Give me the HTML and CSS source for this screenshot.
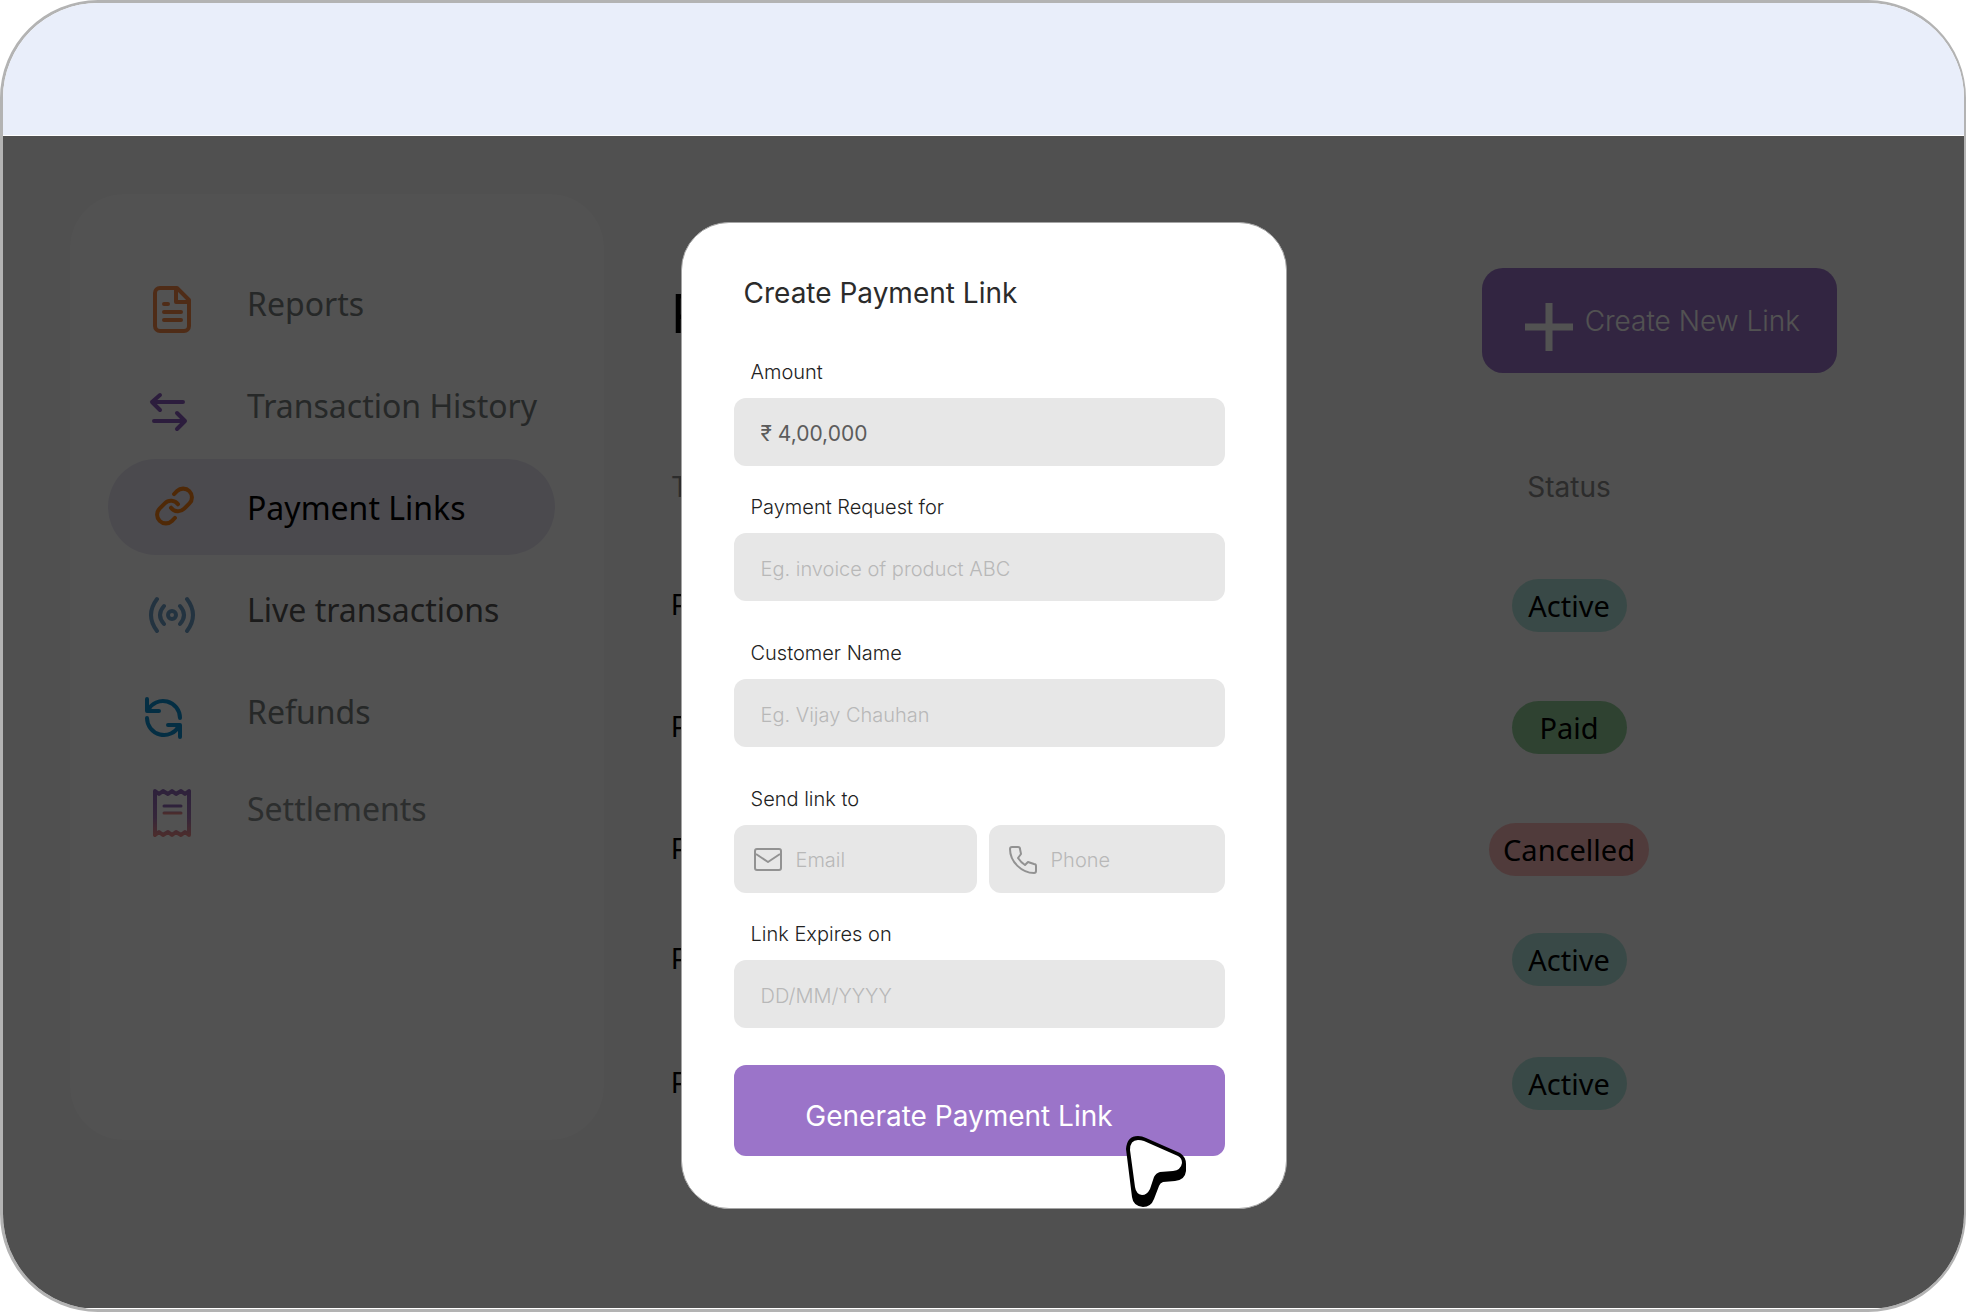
FILE: index.html
```html
<!DOCTYPE html>
<html lang="en">
<head>
    <meta charset="UTF-8">
    <meta name="viewport" content="width=device-width, initial-scale=1.0">
    <title>Payment Links</title>
    <link rel="stylesheet" href="styles.css">
</head>
<body>
    <div class="app">
        <header class="topbar"></header>
        <div class="workspace">
            <nav class="sidebar">
                <a href="#" class="nav-item">
                    <svg class="nav-icon" viewBox="0 0 56 64" stroke="#f5894a">
                        <path d="M33 17H16a5 5 0 0 0-5 5v33a5 5 0 0 0 5 5h24a5 5 0 0 0 5-5V29z"/>
                        <path d="M32 18v13h12M20 33h4M20 41h17M20 49h17"/>
                    </svg>
                    <span>Reports</span>
                </a>
                <a href="#" class="nav-item">
                    <svg class="nav-icon" viewBox="0 0 56 64" stroke="#8a5bbd">
                        <path d="M39 29H8M16 22l-8 7 8 8M10 48h31M33 40l8 8-8 8"/>
                    </svg>
                    <span>Transaction History</span>
                </a>
                <a href="#" class="nav-item active">
                    <svg class="nav-icon" viewBox="0 0 56 64" stroke="#f57f17">
                        <g transform="translate(9.5 10) scale(1.75)" stroke-width="2.3">
                            <path d="M10 13a5 5 0 0 0 7.54.54l3-3a5 5 0 0 0-7.07-7.07l-1.72 1.71"/>
                            <path d="M14 11a5 5 0 0 0-7.54-.54l-3 3a5 5 0 0 0 7.07 7.07l1.71-1.71"/>
                        </g>
                    </svg>
                    <span>Payment Links</span>
                </a>
                <a href="#" class="nav-item strong">
                    <svg class="nav-icon" viewBox="0 0 56 64" stroke="#6f9fc8">
                        <circle cx="28" cy="38" r="4"/>
                        <path d="M20 29q-8 9 0 18M36 29q8 9 0 18M13 22q-12 16 0 32M43 22q12 16 0 32"/>
                    </svg>
                    <span>Live transactions</span>
                </a>
                <a href="#" class="nav-item">
                    <svg class="nav-icon" viewBox="0 0 56 64" stroke="#0f8fd0">
                        <path d="M3 20v12h12M4 31a17 17 0 0 1 32 8M24 46h12v12M35 47a17 17 0 0 1-32-8"/>
                    </svg>
                    <span>Refunds</span>
                </a>
                <a href="#" class="nav-item light">
                    <svg class="nav-icon" viewBox="0 0 56 64" stroke="url(#receipt)">
                        <defs>
                            <linearGradient id="receipt" x1="0" y1="0" x2="0" y2="1">
                                <stop offset="0" stop-color="#9068b8"/>
                                <stop offset=".6" stop-color="#a577b5"/>
                                <stop offset="1" stop-color="#e88a8a"/>
                            </linearGradient>
                        </defs>
                        <path d="M11 15l4 3 4-3 5 3 4-3 4 3 5-3 4 3 4-3v44l-4-3-4 3-5-3-4 3-4-3-5 3-4-3-4 3z"/>
                        <path stroke-width="3" d="M20 30h17v.1M20 37h17v.1"/>
                    </svg>
                    <span>Settlements</span>
                </a>
            </nav>

            <main class="content">
                <div class="content-head">
                    <h1>P</h1>
                    <button type="button" class="create-button">
                        <svg class="plus-icon" viewBox="0 0 48 60"><path d="M24 12v48M0 36h48"/></svg>
                        Create New Link
                    </button>
                </div>
                <table class="links-table">
                    <thead>
                        <tr><th>T</th><th>Status</th></tr>
                    </thead>
                    <tbody>
                        <tr><td>P</td><td><span class="badge teal">Active</span></td></tr>
                        <tr><td>P</td><td><span class="badge green">Paid</span></td></tr>
                        <tr><td>P</td><td><span class="badge red">Cancelled</span></td></tr>
                        <tr class="compact"><td>P</td><td><span class="badge teal">Active</span></td></tr>
                        <tr><td>P</td><td><span class="badge teal">Active</span></td></tr>
                    </tbody>
                </table>
            </main>

            <div class="overlay">
                <form class="modal">
                    <h2>Create Payment Link</h2>
                    <div class="field">
                        <label for="amount">Amount</label>
                        <input type="text" id="amount" class="box" value="₹ 4,00,000">
                    </div>
                    <div class="field spaced">
                        <label for="purpose">Payment Request for</label>
                        <input type="text" id="purpose" class="box" placeholder="Eg. invoice of product ABC">
                    </div>
                    <div class="field spaced">
                        <label for="customer">Customer Name</label>
                        <input type="text" id="customer" class="box" placeholder="Eg. Vijay Chauhan">
                    </div>
                    <div class="field">
                        <label for="email">Send link to</label>
                        <div class="contact-row">
                            <div class="box icon-box">
                                <svg class="field-icon" viewBox="0 0 28 28"><rect x="1" y="3" width="26" height="21" rx="2"/><path d="M2 8l12 8 12-8"/></svg>
                                <input type="email" id="email" placeholder="Email">
                            </div>
                            <div class="box icon-box">
                                <svg class="field-icon" viewBox="0 0 28 28"><path d="M3 1h6a2 2 0 0 1 2 2l1 5-3 4c2 3 4 5 7 7l3-3 6 2a2 2 0 0 1 2 2v5a2 2 0 0 1-2 2C13 27 1 16 1 3a2 2 0 0 1 2-2z"/></svg>
                                <input type="tel" placeholder="Phone" aria-label="Phone">
                            </div>
                        </div>
                    </div>
                    <div class="field">
                        <label for="expiry">Link Expires on</label>
                        <input type="text" id="expiry" class="box" placeholder="DD/MM/YYYY">
                    </div>
                    <div class="submit-row">
                        <button type="submit" class="submit-button">Generate Payment Link</button>
                        <svg class="cursor" viewBox="0 0 60 71">
                            <path fill="#000" d="M0 13Q1 0 12 0q4 0 8 2l34 15q6 4 6 11v7q-1 9-11 10l-12 1q-3 1-4 4l-5 13q-3 8-11 8-10-1-11-10z"/>
                            <path fill="#fff" d="M4 14Q4 4 12 4q3 0 6 1l34 15q4 2 4 7-1 7-9 8l-13 1q-4 1-6 5l-4 12q-3 6-8 6-6-1-7-8z"/>
                        </svg>
                    </div>
                </form>
            </div>
        </div>
    </div>
</body>
</html>
```
FILE: styles.css
```css
* {
    box-sizing: border-box;
}
body {
    margin: 0;
    background-color: #ffffff;
    font-family: Inter, "Liberation Sans", sans-serif;
}
button, input {
    font-family: inherit;
}
.app {
    display: flex;
    flex-direction: column;
    min-height: 100vh;
    border: 3px solid #b3b3b3;
    border-right-width: 2px;
    border-radius: 98px;
    overflow: hidden;
}
.topbar {
    height: 133px;
    background-color: #e9eefa;
    border-bottom: 1px solid #ffffff;
}
.workspace {
    position: relative;
    flex: 1;
    display: flex;
    padding: 58px 127px 148px 67px;
    background-color: #f7f7f7;
    border-bottom: 1px solid #ffffff;
}
.sidebar {
    display: flex;
    flex-direction: column;
    gap: 6px;
    width: 534px;
    flex-shrink: 0;
    margin-bottom: 20px;
    padding: 61px 49px 0 38px;
    border-radius: 54px;
    background-color: #fdfdfd;
    font-family: "Noto Sans", sans-serif;
}
.nav-item {
    display: flex;
    align-items: center;
    gap: 47px;
    height: 96px;
    padding-left: 36px;
    border-radius: 48px;
    color: #777d7c;
    font-size: 32px;
    white-space: nowrap;
    text-decoration: none;
}
.nav-item:last-child {
    height: 86px;
}
.nav-item.active {
    background-color: #e8e5f3;
    color: #000000;
}
.nav-item.strong {
    color: #555555;
}
.nav-item.light {
    color: #8a8f8e;
}
.nav-icon {
    width: 56px;
    height: 64px;
    flex-shrink: 0;
    fill: none;
    stroke-width: 4;
    stroke-linecap: round;
    stroke-linejoin: round;
}
.content {
    flex: 1;
    margin-left: 67px;
    padding-top: 74px;
}
.content-head {
    display: flex;
    align-items: center;
    justify-content: space-between;
    margin-bottom: 57px;
}
h1 {
    margin: 0;
    padding-bottom: 14px;
    font-size: 54px;
    line-height: 60px;
    font-weight: 400;
}
.create-button {
    display: flex;
    align-items: center;
    gap: 12px;
    height: 105px;
    padding: 0 37px 0 43px;
    border: none;
    border-radius: 21px;
    background-color: #9b74c9;
    color: #ffffff;
    font-size: 28px;
    font-weight: 300;
    cursor: pointer;
}
.plus-icon {
    width: 48px;
    height: 60px;
    fill: none;
    stroke: #ffffff;
    stroke-width: 7;
}
.links-table {
    width: 100%;
    border-collapse: collapse;
    font-size: 28px;
}
.links-table th {
    height: 114px;
    padding: 0;
    color: #888888;
    font-weight: 400;
    text-align: left;
}
.links-table td {
    height: 122px;
    padding: 0;
}
.links-table .compact td {
    height: 98px;
}
.links-table tr:last-child td {
    height: 150px;
}
.links-table th:last-child, .links-table td:last-child {
    width: 346px;
    padding-right: 188px;
    text-align: center;
}
.badge {
    display: inline-block;
    min-width: 115px;
    padding: 0 14px;
    border-radius: 27px;
    font-family: "Noto Sans", sans-serif;
    font-size: 29px;
    line-height: 53px;
    vertical-align: middle;
}
.teal {
    background-color: #b2e4db;
}
.green {
    background-color: #93ce99;
}
.red {
    background-color: #f7b8b8;
}
.overlay {
    position: absolute;
    inset: 0;
    display: flex;
    align-items: flex-start;
    justify-content: center;
    padding-top: 86px;
    background-color: rgba(0, 0, 0, 0.68);
}
.modal {
    width: 100%;
    max-width: 606px;
    padding: 50px 61px 52px 52px;
    border: 1px solid #a5a5a5;
    border-radius: 48px;
    background-color: #ffffff;
}
h2 {
    margin: 0 0 45px 10px;
    color: #2b2b2b;
    font-size: 28px;
    line-height: 40px;
    font-weight: 400;
}
.field {
    margin-bottom: 27px;
}
.field.spaced {
    margin-bottom: 38px;
}
.field label {
    display: block;
    margin: 0 0 12px 17px;
    color: #222222;
    font-size: 20px;
    line-height: 28px;
    font-weight: 300;
}
.box {
    display: block;
    width: 100%;
    height: 68px;
    padding: 3px 27px 0;
    border: none;
    border-radius: 12px;
    background-color: #e7e7e7;
    color: #444444;
    font-size: 20px;
    font-weight: 300;
}
#amount {
    font-size: 21px;
    font-weight: 400;
    color: #5c5c5c;
}
.modal input::placeholder {
    color: #b8b8b8;
    opacity: 1;
}
.contact-row {
    display: grid;
    grid-template-columns: 34fr 33fr;
    gap: 12px;
}
.icon-box {
    display: flex;
    align-items: center;
    gap: 14px;
    padding: 2px 20px 0;
}
.icon-box input {
    width: 100%;
    min-width: 0;
    padding: 0;
    border: none;
    background: none;
    font-size: 20px;
    font-weight: 300;
}
.field-icon {
    width: 28px;
    height: 28px;
    flex-shrink: 0;
    fill: none;
    stroke: #929292;
    stroke-width: 2;
    stroke-linejoin: round;
}
.submit-row {
    position: relative;
    margin-top: 37px;
}
.submit-button {
    display: block;
    width: 100%;
    height: 91px;
    padding: 10px 40px 0 0;
    border: none;
    border-radius: 12px;
    background-color: #9b74c9;
    color: #ffffff;
    font-size: 28px;
    font-weight: 400;
    cursor: pointer;
}
.cursor {
    position: absolute;
    top: 71px;
    right: 39px;
    width: 60px;
    height: 71px;
}
```
